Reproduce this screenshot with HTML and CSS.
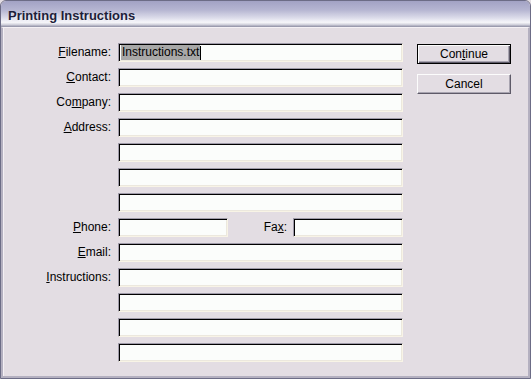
FILE: index.html
```html
<!DOCTYPE html>
<html>
<head>
<meta charset="utf-8">
<title>Printing Instructions</title>
<link rel="stylesheet" href="styles.css">
</head>
<body>
<div class="window">
  <div class="titlebar"><span class="title">Printing Instructions</span></div>
  <div class="body">
    <div class="form">
      <label class="lbl"><u>F</u>ilename:</label>
      <div class="field"><span class="sel">Instructions.txt</span><span class="caret"></span></div>
      <label class="lbl"><u>C</u>ontact:</label>
      <div class="field"></div>
      <label class="lbl">Co<u>m</u>pany:</label>
      <div class="field"></div>
      <label class="lbl"><u>A</u>ddress:</label>
      <div class="field"></div>
      <span></span>
      <div class="field"></div>
      <span></span>
      <div class="field"></div>
      <span></span>
      <div class="field"></div>
      <label class="lbl"><u>P</u>hone:</label>
      <div class="split">
        <div class="field short"></div>
        <label class="lbl fax">Fa<u>x</u>:</label>
        <div class="field short"></div>
      </div>
      <label class="lbl"><u>E</u>mail:</label>
      <div class="field"></div>
      <label class="lbl"><u>I</u>nstructions:</label>
      <div class="field"></div>
      <span></span>
      <div class="field"></div>
      <span></span>
      <div class="field"></div>
      <span></span>
      <div class="field"></div>
    </div>
    <div class="buttons">
      <button class="btn default">Con<u>t</u>inue</button>
      <button class="btn">Cancel</button>
    </div>
  </div>
</div>
</body>
</html>
```
FILE: styles.css
```css
html, body {
  margin: 0;
  padding: 0;
  background: #e3dde3;
}
.window {
  width: 531px;
  height: 379px;
  box-sizing: border-box;
  border: 1px solid #6c6c86;
  border-radius: 6px 6px 0 0;
  display: flex;
  flex-direction: column;
  font-family: "Liberation Sans", Arial, sans-serif;
  font-size: 12px;
  color: #000;
  overflow: hidden;
}
.titlebar {
  height: 26px;
  flex: none;
  box-sizing: border-box;
  padding-left: 7px;
  display: flex;
  align-items: center;
  background: linear-gradient(#a2a2c4 0%, #b6b6d2 35%, #dcdcea 65%, #f6f6fa 82%, #d6d6e0 90%, #8c8ca2 100%);
  border-radius: 5px 5px 0 0;
}
.title {
  font-weight: bold;
  font-size: 13px;
  color: #1e1e3a;
  text-shadow: 1px 1px 0 rgba(255,255,255,0.45);
  padding-top: 3px;
}
.body {
  flex: 1;
  display: flex;
  align-items: flex-start;
  background: #e3dde3;
  border-left: 2px solid #b4b0c0;
  border-right: 2px solid #b4b0c0;
  border-bottom: 2px solid #b4b0c0;
  border-top: 1px solid #f4f0f4;
  padding-top: 15px;
  box-shadow: inset 1px 0 0 #f4f0f4;
}
.form {
  display: grid;
  grid-template-columns: 108px 285px;
  grid-auto-rows: 19px;
  column-gap: 7px;
  row-gap: 6px;
}
.lbl {
  display: flex;
  align-items: center;
  justify-content: flex-end;
  line-height: 19px;
  white-space: nowrap;
}
.field {
  box-sizing: border-box;
  height: 19px;
  background: #fbfdfb;
  border: 1px solid;
  border-color: #9e9aa8 #f8f4e6 #f8f4e6 #9e9aa8;
  box-shadow: inset 1px 1px 0 #000, inset -1px -1px 0 #ece8de;
  display: flex;
  align-items: center;
  padding-left: 2px;
  line-height: 15px;
}
.sel {
  background: #a8a8a8;
  color: #000;
  padding: 0 1px;
}
.caret {
  width: 1px;
  height: 14px;
  background: #000;
}
.split {
  display: flex;
  align-items: center;
}
.field.short {
  width: 110px;
  flex: none;
}
.fax {
  flex: 1;
  padding-right: 6px;
}
.buttons {
  display: flex;
  flex-direction: column;
  gap: 10px;
  margin-left: 14px;
  padding-top: 1px;
}
.btn {
  width: 94px;
  height: 20px;
  box-sizing: border-box;
  font-family: "Liberation Sans", Arial, sans-serif;
  font-size: 12px;
  color: #000;
  background: #e3dde3;
  border: 1px solid;
  border-color: #fcfcfc #5e5a68 #5e5a68 #fcfcfc;
  box-shadow: inset -1px -1px 0 #a8a4b0;
  padding: 0;
  line-height: 16px;
}
.btn.default {
  border-color: #000;
  box-shadow: inset 1px 1px 0 #fcfcfc, inset -1px -1px 0 #5e5a68, inset -2px -2px 0 #a8a4b0;
}
```
